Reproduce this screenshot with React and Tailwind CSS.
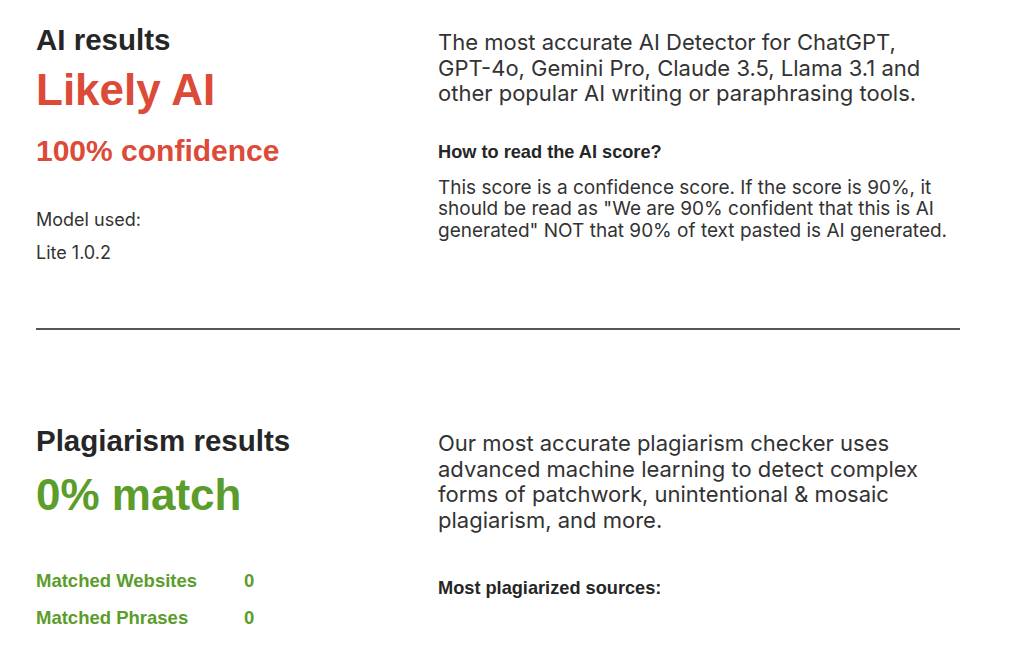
const heading = "font-['Liberation_Sans',Arial,sans-serif] font-bold";
const body = "font-['Inter','Noto_Sans',sans-serif]";

const AiResults = () => (
  <section className="grid grid-cols-[402px_512px]">
    <div className="flex flex-col">
      <h2 className={`${heading} text-[29.5px] leading-[32px] text-[#262626]`}>AI results</h2>
      <p className={`${heading} mt-[10px] text-[44px] leading-[48px] text-[#dc4a38]`}>Likely AI</p>
      <p className={`${heading} mt-[19px] text-[30px] leading-[36px] text-[#dc4a38]`}>100% confidence</p>
      <p className={`${body} mt-[39px] text-[18px] leading-[24px] text-[#333]`}>Model used:</p>
      <p className={`${body} mt-[9px] text-[18px] leading-[24px] text-[#333]`}>Lite 1.0.2</p>
    </div>
    <div className="flex flex-col pt-[6px]">
      <p className={`${body} text-[22px] leading-[25.5px] text-[#333]`}>
        The most accurate AI Detector for ChatGPT, GPT-4o, Gemini Pro, Claude 3.5, Llama 3.1 and
        other popular AI writing or paraphrasing tools.
      </p>
      <h3 className={`${heading} mt-[33px] text-[18.2px] leading-[24px] text-[#262626]`}>
        How to read the AI score?
      </h3>
      <p className={`${body} mt-[13px] text-[19px] leading-[21.5px] text-[#333]`}>
        This score is a confidence score. If the score is 90%, it should be read as "We are 90%
        confident that this is AI generated" NOT that 90% of text pasted is AI generated.
      </p>
    </div>
  </section>
);

const PlagiarismResults = () => (
  <section className="grid grid-cols-[402px_512px]">
    <div className="flex flex-col">
      <h2 className={`${heading} text-[29.5px] leading-[32px] text-[#262626]`}>Plagiarism results</h2>
      <p className={`${heading} mt-[14px] text-[44px] leading-[48px] text-[#5b9d2b]`}>0% match</p>
      <div className={`${heading} mt-[50px] grid grid-cols-[208px_auto] gap-y-[13px] text-[18.5px] leading-[24px] text-[#5b9d2b]`}>
        <span>Matched Websites</span>
        <span>0</span>
        <span>Matched Phrases</span>
        <span>0</span>
      </div>
    </div>
    <div className="flex flex-col pt-[6px]">
      <p className={`${body} text-[22px] leading-[25.5px] text-[#333]`}>
        Our most accurate plagiarism checker uses advanced machine learning to detect complex forms
        of patchwork, unintentional &amp; mosaic plagiarism, and more.
      </p>
      <h3 className={`${heading} mt-[43px] text-[18.2px] leading-[24px] text-[#262626]`}>
        Most plagiarized sources:
      </h3>
    </div>
  </section>
);

export default function App() {
  return (
    <div className="min-h-screen bg-white">
      <div className="w-[960px] pl-[36px] pt-[24px]">
        <AiResults />
        <div className="mt-[63px] h-[2px] bg-[#555]" />
        <div className="mt-[95px]">
          <PlagiarismResults />
        </div>
      </div>
    </div>
  );
}
